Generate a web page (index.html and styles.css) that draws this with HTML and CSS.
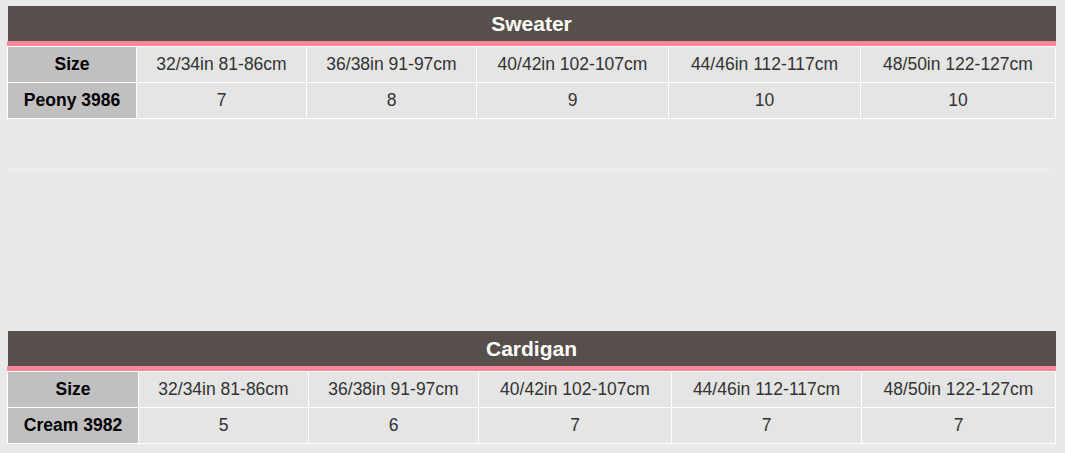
FILE: index.html
```html
<!DOCTYPE html>
<html>
<head>
<meta charset="utf-8">
<link rel="stylesheet" href="styles.css">
</head>
<body>
<div class="page">
  <table class="size-table sweater">
    <colgroup>
      <col class="c1"><col class="c2"><col class="c3"><col class="c4"><col class="c5"><col class="c6">
    </colgroup>
    <thead>
      <tr><th colspan="6" class="title">Sweater</th></tr>
    </thead>
    <tbody>
      <tr class="first"><th class="label">Size</th><td>32/34in 81-86cm</td><td>36/38in 91-97cm</td><td>40/42in 102-107cm</td><td>44/46in 112-117cm</td><td>48/50in 122-127cm</td></tr>
      <tr><th class="label">Peony 3986</th><td>7</td><td>8</td><td>9</td><td>10</td><td>10</td></tr>
    </tbody>
  </table>
  <div class="divider"></div>
  <table class="size-table cardigan">
    <colgroup>
      <col class="c1"><col class="c2"><col class="c3"><col class="c4"><col class="c5"><col class="c6">
    </colgroup>
    <thead>
      <tr><th colspan="6" class="title">Cardigan</th></tr>
    </thead>
    <tbody>
      <tr class="first"><th class="label">Size</th><td>32/34in 81-86cm</td><td>36/38in 91-97cm</td><td>40/42in 102-107cm</td><td>44/46in 112-117cm</td><td>48/50in 122-127cm</td></tr>
      <tr><th class="label">Cream 3982</th><td>5</td><td>6</td><td>7</td><td>7</td><td>7</td></tr>
    </tbody>
  </table>
</div>
</body>
</html>
```
FILE: styles.css
```css
html, body {
  margin: 0;
  padding: 0;
  background: #e9e9e9;
}
.page {
  padding: 6px 9px 0 7px;
  font-family: "Liberation Sans", Arial, sans-serif;
}
.size-table {
  width: 1049px;
  border-collapse: collapse;
  table-layout: fixed;
}
.sweater .c1 { width: 129px; }
.sweater .c2 { width: 170px; }
.sweater .c3 { width: 170px; }
.sweater .c4 { width: 192px; }
.sweater .c5 { width: 192px; }
.cardigan .c1 { width: 131px; }
.cardigan .c2 { width: 170px; }
.cardigan .c3 { width: 170px; }
.cardigan .c4 { width: 193px; }
.cardigan .c5 { width: 190px; }
.title {
  background: #574f4b;
  color: #ffffff;
  font-size: 21px;
  font-weight: bold;
  height: 35px;
  padding: 0;
  border-bottom: 5px solid #ff869c;
  text-align: center;
  vertical-align: middle;
}
.size-table td,
.size-table .label {
  border: 1px solid #ffffff;
  height: 35px;
  padding: 0;
  text-align: center;
  vertical-align: middle;
  font-size: 17.5px;
}
.size-table td {
  background-color: #e5e5e5;
  color: #333333;
}
.size-table .label {
  background-color: #c0c0c0;
  color: #000000;
  font-weight: bold;
}
.size-table .first td,
.size-table .first .label {
  height: 35px;
  padding-top: 1px;
  background-image: linear-gradient(#ffffff, #ffffff);
  background-size: 100% 1px;
  background-repeat: no-repeat;
}
.divider {
  margin: 49px 2px 161px 1px;
  height: 2px;
  background: #ececec;
}
```
